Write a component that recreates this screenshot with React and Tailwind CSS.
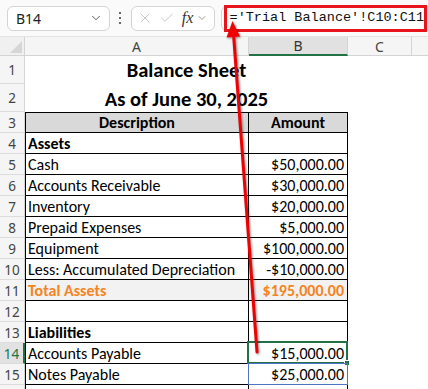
import { X, Check, ChevronDown } from "lucide-react";

const rows = [
  { n: 4, a: "Assets", b: "", bold: true },
  { n: 5, a: "Cash", b: "$50,000.00" },
  { n: 6, a: "Accounts Receivable", b: "$30,000.00" },
  { n: 7, a: "Inventory", b: "$20,000.00" },
  { n: 8, a: "Prepaid Expenses", b: "$5,000.00" },
  { n: 9, a: "Equipment", b: "$100,000.00" },
  { n: 10, a: "Less: Accumulated Depreciation", b: "-$10,000.00" },
  { n: 11, a: "Total Assets", b: "$195,000.00", total: true },
  { n: 12, a: "", b: "" },
  { n: 13, a: "Liabilities", b: "", bold: true },
  { n: 14, a: "Accounts Payable", b: "$15,000.00", selected: true },
  { n: 15, a: "Notes Payable", b: "$25,000.00", ref: true },
  { n: "", a: "", b: "" },
];

const cellFont = { fontFamily: "Carlito, Lato, 'Liberation Sans', sans-serif" };

function RowHead({ n, h, active }) {
  return (
    <div
      className={`w-[25px] shrink-0 flex items-center justify-center pt-[2px] border-b border-[#dcdcdc] text-[13.5px] ${
        active
          ? "bg-[#e2e2e2] text-[#217346] border-r-2 border-r-[#217346]"
          : "bg-[#f5f5f5] text-[#444] border-r border-r-[#d4d4d4]"
      } ${h}`}
      style={{ fontFamily: "'Noto Sans', 'Liberation Sans', sans-serif" }}
    >
      {n}
    </div>
  );
}

export default function App() {
  return (
    <div
      className="relative w-[428px] h-[389px] overflow-hidden bg-white"
      style={{ fontFamily: "'Noto Sans', 'Liberation Sans', sans-serif" }}
    >
      {/* formula bar */}
      <div className="h-[37px] flex items-center bg-[#fafafa] border-b border-[#e3e3e3]">
        <div className="ml-[7px] w-[103px] h-[25px] border border-[#d4d4d4] rounded-md bg-white flex items-center pl-[8px] pr-[6px]">
          <span className="text-[14px] text-[#222] flex-1">B14</span>
          <ChevronDown size={14} strokeWidth={1.5} className="text-[#444]" />
        </div>
        <div className="w-[21px] flex flex-col items-center gap-[3px]">
          <span className="w-[2px] h-[2px] bg-[#333] rounded-full" />
          <span className="w-[2px] h-[2px] bg-[#333] rounded-full" />
          <span className="w-[2px] h-[2px] bg-[#333] rounded-full" />
        </div>
        <div className="w-[84px] h-[25px] border border-[#d4d4d4] rounded-md bg-white flex items-center pl-[5px]">
          <X size={16} strokeWidth={1} className="text-[#aaa]" />
          <Check size={16} strokeWidth={1} className="text-[#aaa] ml-[6px]" />
          <span
            className="ml-[7px] text-[16px] italic text-[#333]"
            style={{ fontFamily: "'Liberation Serif', serif" }}
          >
            fx
          </span>
          <ChevronDown size={12} strokeWidth={1.5} className="text-[#777] ml-[3px]" />
        </div>
        <div className="ml-[6px] flex-1 h-[25px] border border-[#d4d4d4] rounded-l-md bg-white flex pl-[2px]">
          <div className="flex-1 -my-[2px] border-[3px] border-[#e8141b] flex items-center pl-[3px]">
            <span
              className="text-[13.5px] text-[#111] whitespace-nowrap"
              style={{ fontFamily: "'Liberation Mono', monospace" }}
            >
              ='Trial Balance'!C10:C11
            </span>
          </div>
        </div>
      </div>

      {/* column headers */}
      <div className="flex h-[19px] text-[14px] text-[#444]">
        <div className="w-[25px] shrink-0 bg-[#f0f0f0] border-r border-b border-[#d4d4d4] flex items-end justify-end p-[2px]">
          <div className="w-0 h-0 border-l-[12px] border-l-transparent border-b-[12px] border-b-[#d6d6d6]" />
        </div>
        <div className="w-[224px] shrink-0 bg-[#f5f5f5] border-r border-b border-[#d4d4d4] flex items-center justify-center">A</div>
        <div className="w-[99px] shrink-0 bg-[#e1e1e1] border-r border-[#d4d4d4] border-b-2 border-b-[#217346] flex items-center justify-center text-[#333]">B</div>
        <div className="w-[64px] shrink-0 bg-[#f5f5f5] border-r border-b border-[#d4d4d4] flex items-center justify-center">C</div>
        <div className="flex-1 bg-[#f5f5f5] border-b border-[#d4d4d4]" />
      </div>

      {/* title rows */}
      <div style={cellFont}>
        <div className="flex h-[28px]">
          <RowHead n={1} h="h-[28px]" />
          <div className="w-[323px] shrink-0 flex items-end justify-center text-[20.5px] leading-[27px] font-bold text-black">
            Balance Sheet
          </div>
        </div>
        <div className="flex h-[28px]">
          <RowHead n={2} h="h-[28px]" />
          <div className="w-[323px] shrink-0 flex items-end justify-center text-[20.5px] leading-[26px] font-bold text-black">
            As of June 30, 2025
          </div>
        </div>

        {/* header row */}
        <div className="flex h-[21px]">
          <RowHead n={3} h="h-[21px]" />
          <div className="w-[224px] shrink-0 bg-[#d9d9d9] border border-black flex items-center justify-center pt-[1px] text-[16px] font-bold">
            Description
          </div>
          <div className="w-[99px] shrink-0 bg-[#d9d9d9] border-y border-r border-black flex items-center justify-center pt-[1px] text-[16px] font-bold">
            Amount
          </div>
        </div>

        {rows.map((r, i) => (
          <div key={i} className="flex h-[21px]">
            <RowHead n={r.n} h="h-[21px]" active={r.selected} />
            <div
              className={`w-[224px] shrink-0 border-x border-b border-black flex items-center pl-[2px] pt-[2px] text-[16px] whitespace-nowrap ${
                r.total ? "bg-[#f2f2f2] text-[#f5841f] font-bold" : "text-black"
              } ${r.bold ? "font-bold" : ""}`}
            >
              {r.a}
            </div>
            <div
              className={`relative w-[99px] shrink-0 border-r border-b border-black flex items-center justify-end pr-[3px] pt-[2px] text-[16px] ${
                r.total ? "bg-[#f2f2f2] text-[#f5841f] font-bold" : "text-black"
              }`}
            >
              {r.b}
              {r.selected && (
                <div className="absolute -left-[2px] -top-[2px] -right-[1px] -bottom-[1px] border-2 border-[#217346]">
                  <div className="absolute -right-[4px] -bottom-[4px] w-[6px] h-[6px] bg-[#217346] border border-white" />
                </div>
              )}
              {r.ref && (
                <div className="absolute -left-[1px] -top-[1px] right-[-1px] bottom-[-1px] border border-[#4d74c9]" />
              )}
            </div>
          </div>
        ))}
      </div>

      {/* red annotation arrow */}
      <svg
        className="absolute left-0 top-0 pointer-events-none drop-shadow-[1px_1px_1px_rgba(0,0,0,0.45)]"
        width="428"
        height="389"
      >
        <line x1="257" y1="352" x2="233.5" y2="34" stroke="#f00000" strokeWidth="3" strokeLinecap="round" />
        <polygon points="232.5,21 240,36.5 226.5,37.5" fill="#f00000" />
      </svg>
    </div>
  );
}
